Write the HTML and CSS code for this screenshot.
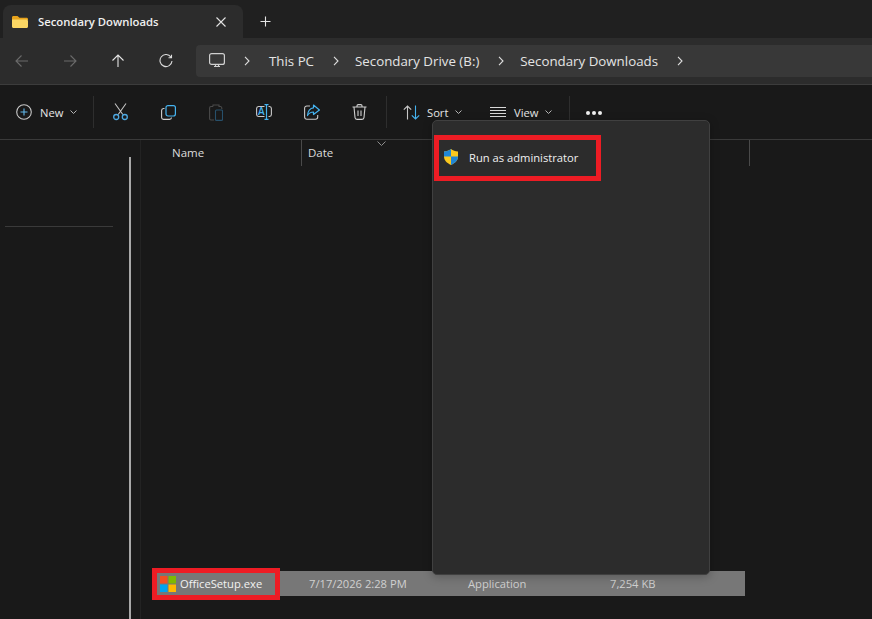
FILE: index.html
```html
<!DOCTYPE html>
<html lang="en">
<head>
  <meta charset="UTF-8">
  <meta name="viewport" content="width=device-width, initial-scale=1.0">
  <title>Secondary Downloads</title>
  <link rel="stylesheet" href="styles.css">
</head>
<body>

<div class="window">

  <!-- Tab strip -->
  <div class="tabstrip">
    <div class="tab">
      <svg class="folder-icon" width="16" height="14" viewBox="0 0 16 14">
        <path d="M0 2.500C0 1.500.7 1 1.500 1h4L7.500 2.800H14.500C15.400 2.800 16 3.400 16 4.200V5H0Z" fill="#e8a31c"/>
        <path d="M0 4.500H14.500C15.400 4.500 16 5.100 16 6V11.500C16 12.400 15.400 13 14.500 13H1.500C.6 13 0 12.400 0 11.500Z" fill="#fbd764"/>
      </svg>
      <span class="tab-title">Secondary Downloads</span>
      <svg class="tab-close" width="10" height="10" viewBox="0 0 10 10"><path d="M.5.500 9.500 9.500M9.500.500.5 9.500" stroke="#e4e4e4" stroke-width="1.100" fill="none"/></svg>
    </div>
    <svg class="tab-new" width="11" height="11" viewBox="0 0 11 11"><path d="M5.500.500V10.500M.5 5.500H10.500" stroke="#e4e4e4" stroke-width="1.100" fill="none"/></svg>
  </div>

  <!-- Navigation and address bar -->
  <div class="navbar">
    <div class="nav-buttons">
      <svg class="nav-btn" width="14" height="14" viewBox="0 0 14 14"><path d="M13 7H1M6.500 1.500 1 7l5.500 5.500" stroke="#6b6b6b" stroke-width="1.100" fill="none"/></svg>
      <svg class="nav-btn" width="14" height="14" viewBox="0 0 14 14"><path d="M1 7H13M7.500 1.500 13 7l-5.500 5.500" stroke="#6b6b6b" stroke-width="1.100" fill="none"/></svg>
      <svg class="nav-btn" width="14" height="14" viewBox="0 0 14 14"><path d="M7 13V1M1.500 6.500 7 1l5.500 5.500" stroke="#e6e6e6" stroke-width="1.100" fill="none"/></svg>
      <svg class="nav-btn" width="14" height="14" viewBox="0 0 14 14"><path d="M12 3.200A6 6 0 1 0 13 7M12.500 .8V3.800H9.500" stroke="#dcdcdc" stroke-width="1.100" fill="none"/></svg>
    </div>
    <div class="address">
      <svg class="pc-icon" width="16" height="15" viewBox="0 0 16 15">
        <rect x=".6" y=".6" width="14.800" height="10.800" rx="2" stroke="#d0d0d0" stroke-width="1.200" fill="none"/>
        <path d="M5 13.500H11M6.500 11.500V13M9.500 11.500V13" stroke="#d0d0d0" stroke-width="1.200" fill="none"/>
      </svg>
      <svg class="crumb-sep first" width="6" height="10" viewBox="0 0 6 10"><path d="M1 .8 5 5 1 9.200" stroke="#dedede" stroke-width="1.100" fill="none"/></svg>
      <span class="crumb">This PC</span>
      <svg class="crumb-sep" width="6" height="10" viewBox="0 0 6 10"><path d="M1 .8 5 5 1 9.200" stroke="#dedede" stroke-width="1.100" fill="none"/></svg>
      <span class="crumb">Secondary Drive (B:)</span>
      <svg class="crumb-sep" width="6" height="10" viewBox="0 0 6 10"><path d="M1 .8 5 5 1 9.200" stroke="#dedede" stroke-width="1.100" fill="none"/></svg>
      <span class="crumb">Secondary Downloads</span>
      <svg class="crumb-sep" width="6" height="10" viewBox="0 0 6 10"><path d="M1 .8 5 5 1 9.200" stroke="#dedede" stroke-width="1.100" fill="none"/></svg>
    </div>
  </div>

  <!-- Command bar -->
  <div class="toolbar">
    <div class="tool tool-new">
      <svg width="16" height="16" viewBox="0 0 16 16">
        <circle cx="8" cy="8" r="7.300" stroke="#c8c8c8" stroke-width="1.100" fill="none"/>
        <path d="M8 4.500V11.500M4.500 8H11.500" stroke="#62b7ea" stroke-width="1.100" fill="none"/>
      </svg>
      <span>New</span>
      <svg class="caret" width="7" height="4" viewBox="0 0 7 4"><path d="M.5.500 3.500 3.500 6.500.5" stroke="#b5b5b5" fill="none"/></svg>
    </div>
    <div class="divider div-a"></div>
    <svg class="icon-cut" width="15" height="18" viewBox="0 0 15 18">
      <path d="M2 .5 9.800 11.500M13 .5 5.200 11.500" stroke="#c4c4c4" stroke-width="1.100" fill="none"/>
      <circle cx="3.200" cy="14" r="2.500" stroke="#4ea9e2" stroke-width="1.300" fill="none"/>
      <circle cx="11.800" cy="14" r="2.500" stroke="#4ea9e2" stroke-width="1.300" fill="none"/>
    </svg>
    <svg class="icon-copy" width="15" height="15" viewBox="0 0 15 15">
      <path d="M3.500 3.500H2.500A2 2 0 0 0 .6 5.500V12.500A2 2 0 0 0 2.500 14.400H8.500A2 2 0 0 0 10.500 12.500" stroke="#d0d0d0" stroke-width="1.100" fill="none"/>
      <rect x="5" y=".6" width="9.400" height="10.400" rx="2" stroke="#45b3f0" stroke-width="1.200" fill="none"/>
    </svg>
    <svg class="icon-paste" width="14" height="17" viewBox="0 0 14 17">
      <path d="M4 2.500H2A1.500 1.500 0 0 0 .6 4V14.500A1.500 1.500 0 0 0 2 16H5M10 2.500H11.500A1.500 1.500 0 0 1 12.800 4V5M4 2.500V1H10V3" stroke="#4a4a4a" stroke-width="1.100" fill="none"/>
      <rect x="6.500" y="6" width="7" height="10.400" rx="1" stroke="#27506b" stroke-width="1.100" fill="none"/>
    </svg>
    <svg class="icon-rename" width="16" height="16" viewBox="0 0 16 16">
      <path d="M8.500 2.500H2.500A2 2 0 0 0 .6 4.500V10.500A2 2 0 0 0 2.500 12.500H8.500M12.500 2.500H13.500A2 2 0 0 1 15.400 4.500V10.500A2 2 0 0 1 13.500 12.500H12.500" stroke="#c8c8c8" stroke-width="1.100" fill="none"/>
      <path d="M8.500 .6H12.500M8.500 15.400H12.500M10.500 .6V15.400" stroke="#45b3f0" stroke-width="1.200" fill="none"/>
      <text class="rename-letter" x="2" y="11">A</text>
    </svg>
    <svg class="icon-share" width="16" height="16" viewBox="0 0 16 16">
      <path d="M6 2H2.800A2.200 2.200 0 0 0 .6 4.200V13A2.200 2.200 0 0 0 2.800 15.200H11.500A2.200 2.200 0 0 0 13.700 13V11" stroke="#c8c8c8" stroke-width="1.100" fill="none"/>
      <path d="M9.500 1 15.400 6 9.500 10.500V8C7 8 5 9 3.500 11.500 3.800 7.500 6 4 9.500 3.800Z" stroke="#45b3f0" stroke-width="1.200" fill="none" stroke-linejoin="round"/>
    </svg>
    <svg class="icon-delete" width="15" height="16" viewBox="0 0 15 16">
      <path d="M.5 3H14.500M5 3V1.800A1.200 1.200 0 0 1 6.200.6H8.800A1.200 1.200 0 0 1 10 1.800V3M2 3 3 13.500A2 2 0 0 0 5 15.400H10A2 2 0 0 0 12 13.500L13 3M6 6.500V12M9 6.500V12" stroke="#cfcfcf" stroke-width="1.100" fill="none"/>
    </svg>
    <div class="divider div-b"></div>
    <div class="tool tool-sort">
      <svg width="17" height="15" viewBox="0 0 17 15">
        <path d="M4.500 14.500V1M.8 4.700 4.500 1 8.200 4.700" stroke="#c8c8c8" stroke-width="1.100" fill="none"/>
        <path d="M12.500 .5V14M8.800 10.300 12.500 14 16.200 10.300" stroke="#45b3f0" stroke-width="1.100" fill="none"/>
      </svg>
      <span>Sort</span>
      <svg class="caret" width="7" height="4" viewBox="0 0 7 4"><path d="M.5.500 3.500 3.500 6.500.5" stroke="#b5b5b5" fill="none"/></svg>
    </div>
    <div class="tool tool-view">
      <svg width="16" height="11" viewBox="0 0 16 11">
        <path d="M0 .5H16M0 3.500H16M0 6.500H16M0 9.500H16" stroke="#d8d8d8" stroke-width="1" fill="none"/>
      </svg>
      <span>View</span>
      <svg class="caret" width="7" height="4" viewBox="0 0 7 4"><path d="M.5.500 3.500 3.500 6.500.5" stroke="#b5b5b5" fill="none"/></svg>
    </div>
    <div class="divider div-c"></div>
    <div class="more"><i></i><i></i><i></i></div>
  </div>

  <!-- Sidebar and file list -->
  <div class="body-area">
    <div class="sidebar">
      <div class="side-main">
        <div class="side-line"></div>
      </div>
      <div class="side-scroll"></div>
    </div>
    <div class="files">
      <div class="col-header">
        <div class="col col-name">Name</div>
        <div class="col col-date">Date
          <svg class="sort-arrow" width="9" height="5" viewBox="0 0 9 5"><path d="M.5.500 4.500 4.500 8.500.5" stroke="#8e8e8e" fill="none"/></svg>
        </div>
      </div>
      <div class="file-row">
        <div class="file-name">
          <svg width="16" height="16" viewBox="0 0 16 16">
            <rect width="7.500" height="7.500" fill="#f25022"/>
            <rect x="8.500" width="7.500" height="7.500" fill="#7fba00"/>
            <rect y="8.500" width="7.500" height="7.500" fill="#00a4ef"/>
            <rect x="8.500" y="8.500" width="7.500" height="7.500" fill="#ffb900"/>
          </svg>
          <span>OfficeSetup.exe</span>
        </div>
        <div class="file-date">7/17/2026 2:28 PM</div>
        <div class="file-type">Application</div>
        <div class="file-size">7,254 KB</div>
      </div>
    </div>
  </div>

  <!-- Context menu and callouts -->
  <div class="context-menu">
    <div class="menu-item">
      <svg width="14" height="16" viewBox="0 0 15 17">
        <path d="M7.500 0C5.500 1.700 3 2.500 0 2.500V8C0 12 3 15 7.500 17 12 15 15 12 15 8V2.500C12 2.500 9.500 1.700 7.500 0Z" fill="#fbc81e"/>
        <path d="M7.500 0C5.500 1.700 3 2.500 0 2.500V8H7.500ZM7.500 8V17C12 15 15 12 15 8Z" fill="#1f86d6"/>
      </svg>
      <span>Run as administrator</span>
    </div>
  </div>
  <div class="callout callout-menu"></div>
  <div class="callout callout-file"></div>

</div>

</body>
</html>
```

FILE: styles.css
```css
* {
  margin: 0;
  padding: 0;
  box-sizing: border-box;
}

html, body {
  height: 100%;
  overflow: hidden;
}

body {
  font-family: "Open Sans", "Noto Sans", sans-serif;
  font-size: 12px;
  color: #e6e6e6;
  background-color: #191919;
}

svg {
  display: block;
  flex-shrink: 0;
}

.window {
  position: relative;
  display: flex;
  flex-direction: column;
  height: 619px;
  overflow: hidden;
}

/* Tab strip */
.tabstrip {
  height: 38px;
  background-color: #202020;
  display: flex;
  align-items: flex-end;
  padding-left: 3px;
  flex-shrink: 0;
}

.tab {
  width: 240px;
  height: 33px;
  background-color: #2c2c2c;
  border-radius: 8px 8px 0 0;
  display: flex;
  align-items: center;
  padding-left: 9px;
}

.tab-title {
  margin-left: 10px;
  font-size: 11.300px;
  font-weight: 600;
  color: #f0f0f0;
  white-space: nowrap;
  width: 178px;
}

.tab-new {
  margin: 0 0 11px 17px;
}

/* Navigation bar */
.navbar {
  height: 47px;
  background-color: #2c2c2c;
  border-bottom: 1px solid #3c3c3c;
  display: flex;
  align-items: center;
  flex-shrink: 0;
  padding-bottom: 1px;
}

.nav-buttons {
  width: 196px;
  display: flex;
  padding-left: 15px;
  gap: 34px;
}

.address {
  flex: 1;
  height: 32px;
  background-color: #383838;
  border-radius: 4px 0 0 4px;
  display: flex;
  align-items: center;
  padding-left: 13px;
}

.crumb {
  font-size: 13.300px;
  color: #e4e4e4;
  white-space: nowrap;
}

.crumb-sep {
  margin: 0 16px 0 19px;
}

.crumb-sep.first {
  margin: 0 19px;
}

/* Command bar */
.toolbar {
  height: 55px;
  background-color: #191919;
  border-bottom: 1px solid #3a3a3a;
  display: flex;
  align-items: center;
  flex-shrink: 0;
  padding-left: 16px;
}

.tool {
  display: flex;
  align-items: center;
  font-size: 11.200px;
  color: #e6e6e6;
}

.tool span {
  white-space: nowrap;
}

.tool-new span {
  width: 30px;
  margin-left: 8px;
}

.divider {
  width: 1px;
  height: 32px;
  background-color: #2e2e2e;
}

.tool-new {
  width: 61px;
}

.div-a {
  margin: 0 19px 0 16px;
}

.icon-copy,
.icon-paste,
.icon-rename {
  margin-left: 33px;
}

.icon-share,
.icon-delete {
  margin-left: 32px;
}

.rename-letter {
  font-size: 10px;
  font-weight: 600;
  fill: #45b3f0;
}

.div-b {
  margin: 0 16px 0 19px;
}

.tool-sort span {
  width: 28px;
  margin-left: 7px;
}

.tool-view {
  margin-left: 28px;
}

.tool-view span {
  width: 31px;
  margin-left: 8px;
}

.div-c {
  margin: 0 16px 0 17px;
}

.more {
  display: flex;
  gap: 2px;
  margin-top: 1px;
}

.more i {
  width: 4px;
  height: 4px;
  border-radius: 50%;
  background-color: #f0f0f0;
}

/* Sidebar and list */
.body-area {
  flex: 1;
  display: flex;
  min-height: 0;
}

.sidebar {
  width: 141px;
  border-right: 1px solid #232323;
  display: flex;
  flex-shrink: 0;
}

.side-main {
  width: 129px;
  padding: 86px 0 0 5px;
}

.side-line {
  width: 108px;
  height: 1px;
  background-color: #3a3a3a;
}

.side-scroll {
  width: 2px;
  margin-top: 17px;
  background-color: #a8a8a8;
}

.files {
  flex: 1;
  display: flex;
  flex-direction: column;
  padding-left: 13px;
}

.col-header {
  height: 26px;
  display: flex;
  font-size: 11.500px;
  color: #dcdcdc;
  flex-shrink: 0;
  width: 596px;
  border-right: 1px solid #4a4a4a;
}

.col {
  display: flex;
  align-items: center;
  position: relative;
  padding-bottom: 2px;
}

.col-name {
  width: 148px;
  padding-left: 18px;
  border-right: 1px solid #4a4a4a;
}

.col-date {
  padding-left: 6px;
}

.sort-arrow {
  position: absolute;
  left: 75px;
  top: 1px;
}

.file-row {
  margin-top: auto;
  margin-bottom: 23px;
  width: 591px;
  height: 25px;
  background-color: #777777;
  display: flex;
  align-items: center;
  font-size: 11.200px;
  color: #d0d0d0;
}

.file-name {
  width: 127px;
  padding-left: 6px;
  display: flex;
  align-items: center;
  gap: 4px;
  color: #f2f2f2;
}

.file-date {
  width: 187px;
  padding-left: 28px;
}

.file-type {
  width: 142px;
}

/* Overlays */
.context-menu {
  position: absolute;
  left: 432px;
  top: 120px;
  width: 278px;
  height: 455px;
  background-color: #2c2c2c;
  border: 1px solid #404040;
  border-radius: 5px;
  box-shadow: 0 2px 10px rgba(0, 0, 0, 0.25);
  padding-top: 13px;
}

.menu-item {
  display: flex;
  align-items: center;
  height: 46px;
  padding-left: 11px;
  gap: 11px;
  font-size: 11.200px;
  color: #f0f0f0;
}

.callout {
  position: absolute;
  border: 5px solid #ed1c24;
}

.callout-menu {
  left: 434px;
  top: 135px;
  width: 167px;
  height: 46px;
}

.callout-file {
  left: 152px;
  top: 568px;
  width: 128px;
  height: 32px;
}
```
